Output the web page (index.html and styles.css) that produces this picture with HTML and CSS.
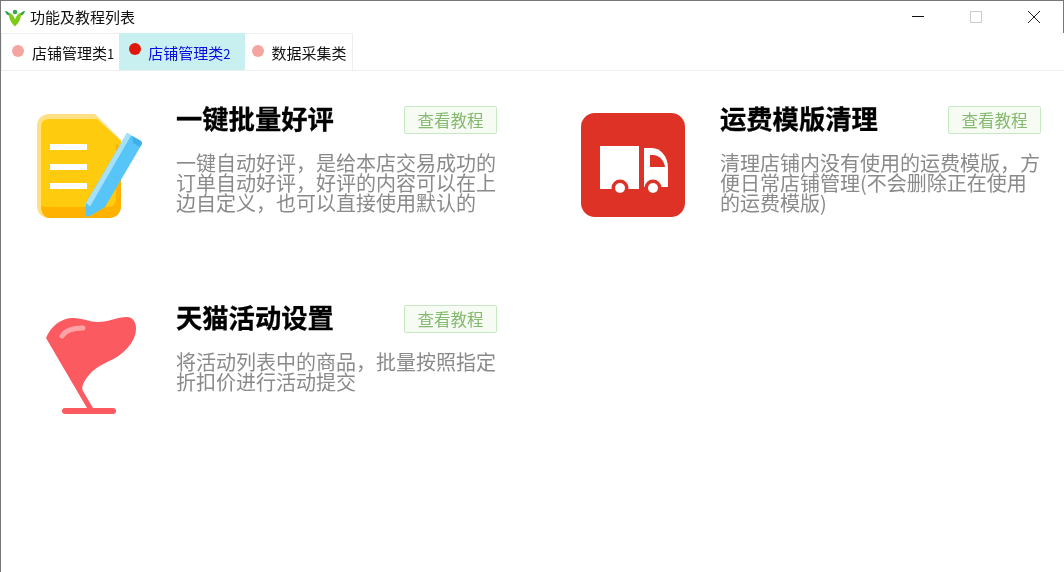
FILE: index.html
```html
<!DOCTYPE html>
<html lang="zh-CN">
<head>
<meta charset="utf-8">
<title>功能及教程列表</title>
<link rel="stylesheet" href="styles.css">
</head>
<body>
<div class="window">
  <header class="titlebar">
    <svg class="app-icon" viewBox="0 0 20 20"><path d="M0 4c2 0 4 1 5 4.500C2.500 8.500 .5 6.500 0 4zM20 4c-2 0-4 1-5 4.500 2.500 0 4.500-2 5-4.500z" fill="#2f9a4a"/><path d="M10 19.500C6 16 3.500 11 4 5.500c2.500 1 5 3.500 6 7 1-3.500 3.500-6 6-7 .5 5.500-2 10.500-6 14z" fill="#7ccb14"/><circle cx="10" cy="5" r="2.200" fill="#35a35a"/></svg>
    <span class="title">功能及教程列表</span>
    <div class="controls">
      <span class="ctl"><svg viewBox="0 0 12 12" class="ctl-svg"><path d="M0 5.500h12" stroke="#111" fill="none"/></svg></span>
      <span class="ctl"><svg viewBox="0 0 12 12" class="ctl-svg"><rect x=".5" y=".5" width="11" height="11" stroke="#ccc" fill="none"/></svg></span>
      <span class="ctl"><svg viewBox="0 0 12 12" class="ctl-svg"><path d="M0 0l12 12M12 0L0 12" stroke="#222" fill="none"/></svg></span>
    </div>
  </header>
  <nav class="tabs">
    <div class="tab first"><i class="dot"></i><span class="tab-label">店铺管理类<small class="num">1</small></span></div>
    <div class="tab active"><i class="dot"></i><span class="tab-label">店铺管理类<small class="num">2</small></span></div>
    <div class="tab last"><i class="dot"></i><span class="tab-label">数据采集类</span></div>
  </nav>
  <main class="grid">
    <section class="card">
      <div class="icon">
        <svg viewBox="0 0 104 104" class="icon-svg">
          <path d="M12 1C5 1 0 6 0 13v80c0 7 5 12 12 12h60c7 0 12-5 12-12V27L58 1z" fill="#ffe082"/>
          <path d="M12 6C7 6 4 9 4 14v79c0 5 4 8 8 8h60c6 0 12-4 12-9V28L60 6z" fill="#ffcb0e"/>
          <path d="M4 93c0 6 3 12 8 12h60c7 0 12-5 12-12V35l-5-5v55c0 6-3 9-8 9H8z" fill="#ffb300"/>
          <path d="M13 31h37v6H13zM13 51h37v6H13zM13 70h37v6H13z" fill="#fff"/>
          <path d="M90 20l14 8c1 1 1 2 1 3L68 94l-15 9c-2 1-4 1-4-1V90z" fill="#57c5f7"/>
          <path d="M90 20l4 2.500-41 71-4-3.500z" fill="#a5e1fb"/>
          <path d="M105 30l-2 4-7-4-1-7 9 5z" fill="#3fb0e8"/>
        </svg>
      </div>
      <div class="body">
        <div class="head"><h2 class="name">一键批量好评</h2><button class="btn">查看教程</button></div>
        <p class="desc">一键自动好评，是给本店交易成功的订单自动好评，好评的内容可以在上边自定义，也可以直接使用默认的</p>
      </div>
    </section>
    <section class="card">
      <div class="icon">
        <svg viewBox="0 0 104 104" class="icon-svg">
          <rect width="104" height="104" rx="14" fill="#de3226"/>
          <path d="M19 33h39v43H19z" fill="#fff"/>
          <path d="M63 35h8c9 0 16 9 16 20v19H63z" fill="#fff"/>
          <path d="M69 42h3c6 0 11 5 12 12H69z" fill="#de3226"/>
          <circle cx="39" cy="75" r="8.500" fill="#de3226"/><circle cx="39" cy="75" r="5" fill="#fff"/>
          <circle cx="72" cy="75" r="8.500" fill="#de3226"/><circle cx="72" cy="75" r="5" fill="#fff"/>
        </svg>
      </div>
      <div class="body">
        <div class="head"><h2 class="name">运费模版清理</h2><button class="btn">查看教程</button></div>
        <p class="desc">清理店铺内没有使用的运费模版，方便日常店铺管理(不会删除正在使用的运费模版)</p>
      </div>
    </section>
    <section class="card">
      <div class="icon">
        <svg viewBox="0 0 104 104" class="icon-svg">
          <path d="M9 26C14 14 24 6 36 6 46 6 52 10 61 10 72 10 80 5 90 5 96 5 99 10 99 17 99 28 90 38 80 45 72 50 60 53 52 63 46 70 44 76 46 79L56 96H50z" fill="#fb5a60"/>
          <rect x="25" y="96" width="54" height="6" rx="3" fill="#fb5a60"/>
          <path d="M25 24c3-5 11-8 21-8" stroke="#fda2a5" stroke-width="5" stroke-linecap="round" fill="none"/>
        </svg>
      </div>
      <div class="body">
        <div class="head"><h2 class="name">天猫活动设置</h2><button class="btn">查看教程</button></div>
        <p class="desc">将活动列表中的商品，批量按照指定折扣价进行活动提交</p>
      </div>
    </section>
  </main>
</div>
</body>
</html>
```

FILE: styles.css
```css
* { box-sizing: border-box; }
html, body { margin: 0; height: 100%; background: #fff; overflow: hidden; }
body { font-family: "Noto Sans CJK SC", "Noto Sans", sans-serif; color: #111; }
.window { height: 572px; border-top: 1px solid #777; border-left: 1px solid #777; display: flex; flex-direction: column; filter: blur(.4px); }
.titlebar { height: 32px; display: flex; align-items: center; padding-left: 4px; border-right: 1px solid #777; flex: none; }
.app-icon { width: 20px; height: 20px; margin-right: 5px; }
.title { font-size: 15px; line-height: 20px; }
.controls { margin-left: auto; display: flex; }
.ctl { width: 58px; display: flex; justify-content: center; }
.ctl-svg { width: 12px; height: 12px; display: block; }
.tabs { height: 38px; display: flex; border-bottom: 1px solid #eee; flex: none; }
.tab { display: flex; align-items: center; font-size: 15px; border-top: 1px solid #eee; padding-top: 1px; }
.tab .dot { width: 12px; height: 12px; border-radius: 50%; background: #f5a5a0; margin-top: -4px; flex: none; }
.tab.first { padding-left: 10px; padding-right: 5px; gap: 8px; border-left: 1px solid #eee; }
.tab.active { background: #c9f0f0; color: #0a0ae0; border-top: 0; padding-left: 10px; padding-right: 14.5px; gap: 7px; }
.tab.active .dot { background: #e0180c; margin-top: -6px; }
.tab.last { border-right: 1px solid #eee; padding-left: 7.5px; padding-right: 6px; gap: 7px; }
.tab-label { white-space: nowrap; }
.num { font-size: 13px; }
.grid { display: grid; grid-template-columns: 544px 1fr; grid-auto-rows: 199px; padding-top: 34px; }
.card { display: flex; padding-left: 36px; }
.icon { width: 104px; height: 104px; margin-top: 8px; flex: none; }
.icon-svg { width: 104px; height: 104px; display: block; overflow: visible; }
.body { width: 321px; margin-left: 35px; }
.head { display: flex; align-items: flex-end; justify-content: space-between; height: 29px; }
.name { margin: 0 0 3px; font-size: 26.3px; line-height: 26px; font-weight: 700; color: #000; -webkit-text-stroke: .3px #000; }
.btn { width: 93px; height: 28px; padding: 0; border: 1px solid #c8e8c4; border-radius: 2px; background: #f6fbf4; color: #84b96e; font: inherit; font-size: 16.5px; }
.desc { margin: 19px 0 0; font-size: 20px; line-height: 20px; color: #8a8a8a; }
```
